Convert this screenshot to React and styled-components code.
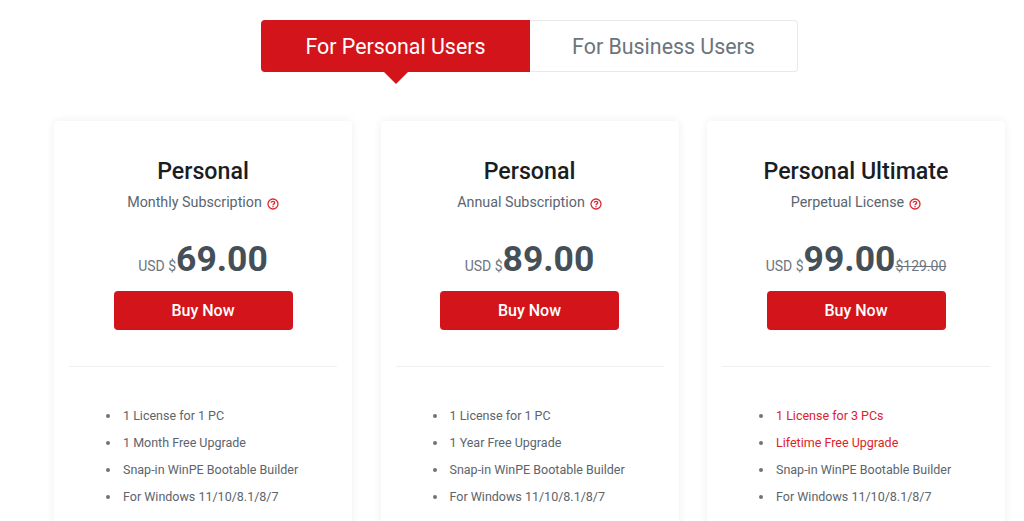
import React from "react";
import styled, { createGlobalStyle } from "styled-components";

const GlobalStyle = createGlobalStyle`
  html, body {
    margin: 0;
    padding: 0;
    height: 521px;
    overflow: hidden;
    background: #fff;
    font-family: Roboto, "Liberation Sans", sans-serif;
  }
`;

const Page = styled.div`
  height: 521px;
  overflow: hidden;
  padding: 20px 0 0 54px;
  box-sizing: border-box;
`;

const Tabs = styled.div`
  display: flex;
  width: 537px;
  height: 52px;
  margin: 0 0 49px 207px;
`;

const Tab = styled.div`
  position: relative;
  box-sizing: border-box;
  flex: 0 0 ${(p) => (p.$active ? "269px" : "268px")};
  display: flex;
  align-items: center;
  justify-content: center;
  font-size: 21.4px;
  color: ${(p) => (p.$active ? "#fff" : "#6c757d")};
  background: ${(p) => (p.$active ? "#d3141b" : "#fff")};
  border: ${(p) => (p.$active ? "none" : "1px solid #e6e8eb")};
  border-left: none;
  border-radius: ${(p) => (p.$active ? "4px 0 0 4px" : "0 4px 4px 0")};

  ${(p) =>
    p.$active &&
    `
    &::after {
      content: "";
      position: absolute;
      left: 123px;
      top: 100%;
      border-left: 12px solid transparent;
      border-right: 12px solid transparent;
      border-top: 12px solid #d3141b;
    }
  `}
`;

const Cards = styled.div`
  display: flex;
  gap: 28.5px;
`;

const Card = styled.div`
  box-sizing: border-box;
  width: 298px;
  height: 440px;
  padding: 0 15px;
  background: #fff;
  border-radius: 4px;
  box-shadow: 0 0 10px rgba(0, 0, 0, 0.07);
`;

const CardHead = styled.div`
  display: flex;
  flex-direction: column;
  align-items: center;
  height: 246px;
  padding-top: 35px;
  box-sizing: border-box;
  border-bottom: 1px solid #eef0f2;
`;

const Title = styled.h3`
  margin: 0;
  font-size: 23.2px;
  line-height: 30px;
  font-weight: 500;
  color: #1a1d24;
`;

const Subtitle = styled.div`
  display: flex;
  align-items: center;
  gap: 5px;
  margin-top: 6px;
  font-size: 14.3px;
  line-height: 20px;
  color: #5a6570;

  svg {
    margin-top: 3px;
  }
`;

const Price = styled.div`
  display: flex;
  align-items: baseline;
  margin-top: 25px;
  height: 44px;
  font-size: 14px;
  color: #6c757d;
`;

const Amount = styled.span`
  font-size: 35.5px;
  line-height: 44px;
  font-weight: 700;
  color: #454f58;
`;

const OldPrice = styled.span`
  font-size: 14px;
  color: #6c757d;
  text-decoration: line-through;
`;

const BuyButton = styled.button`
  width: 179px;
  height: 39px;
  margin-top: 10px;
  border: none;
  border-radius: 4px;
  background: #d3141b;
  color: #fff;
  font-family: inherit;
  font-size: 16px;
  font-weight: 500;
`;

const Features = styled.ul`
  margin: 35px 0 0;
  padding: 0 0 0 37px;
  list-style: none;
`;

const Feature = styled.li`
  display: flex;
  align-items: center;
  gap: 13px;
  height: 27px;
  font-size: 12.5px;
  color: ${(p) => (p.$hot ? "#de222a" : "#5c646c")};

  &::before {
    content: "";
    width: 4px;
    height: 4px;
    border-radius: 50%;
    background: #6c757d;
  }
`;

const HelpIcon = () => (
  <svg width="12" height="12" viewBox="0 0 12 12" fill="none" stroke="#dc2a30">
    <circle cx="6" cy="6" r="5" strokeWidth="1.3" />
    <path d="M4.3 4.8c0-1 .8-1.5 1.7-1.5s1.7.6 1.7 1.4c0 1.2-1.7 1.2-1.7 2.5" strokeWidth="1.3" />
    <path d="M6 8v1.2" strokeWidth="1.3" />
  </svg>
);

const plans = [
  {
    title: "Personal",
    sub: "Monthly Subscription",
    price: "69.00",
    features: [
      { text: "1 License for 1 PC" },
      { text: "1 Month Free Upgrade" },
      { text: "Snap-in WinPE Bootable Builder" },
      { text: "For Windows 11/10/8.1/8/7" },
    ],
  },
  {
    title: "Personal",
    sub: "Annual Subscription",
    price: "89.00",
    features: [
      { text: "1 License for 1 PC" },
      { text: "1 Year Free Upgrade" },
      { text: "Snap-in WinPE Bootable Builder" },
      { text: "For Windows 11/10/8.1/8/7" },
    ],
  },
  {
    title: "Personal Ultimate",
    sub: "Perpetual License",
    price: "99.00",
    old: "$129.00",
    features: [
      { text: "1 License for 3 PCs", hot: true },
      { text: "Lifetime Free Upgrade", hot: true },
      { text: "Snap-in WinPE Bootable Builder" },
      { text: "For Windows 11/10/8.1/8/7" },
    ],
  },
];

const App = () => (
  <Page>
    <GlobalStyle />
    <Tabs>
      <Tab $active>For Personal Users</Tab>
      <Tab>For Business Users</Tab>
    </Tabs>
    <Cards>
      {plans.map((plan) => (
        <Card key={plan.price}>
          <CardHead>
            <Title>{plan.title}</Title>
            <Subtitle>
              {plan.sub} <HelpIcon />
            </Subtitle>
            <Price>
              USD $<Amount>{plan.price}</Amount>
              {plan.old && <OldPrice>{plan.old}</OldPrice>}
            </Price>
            <BuyButton>Buy Now</BuyButton>
          </CardHead>
          <Features>
            {plan.features.map((f) => (
              <Feature key={f.text} $hot={f.hot}>
                {f.text}
              </Feature>
            ))}
          </Features>
        </Card>
      ))}
    </Cards>
  </Page>
);

export default App;
